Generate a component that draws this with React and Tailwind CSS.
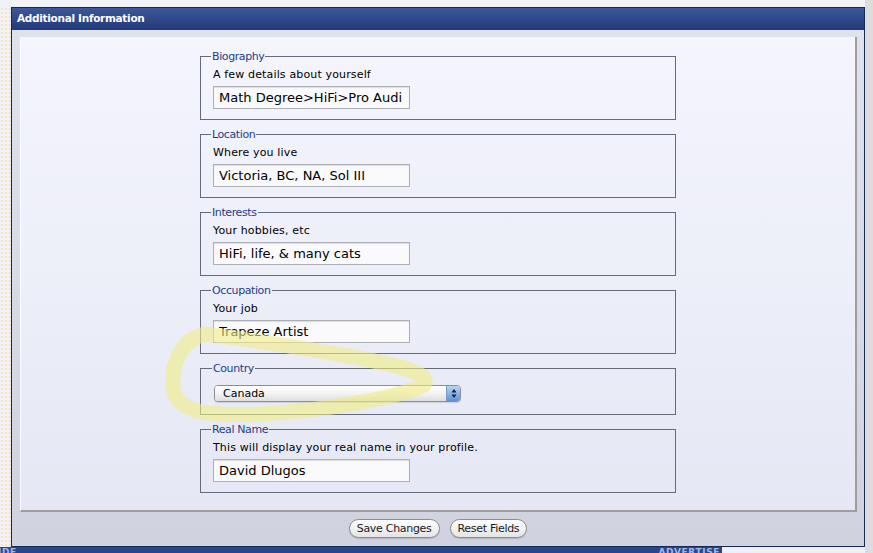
import React from 'react';

const fields = [
    { legend: 'Biography', hint: 'A few details about yourself', value: 'Math Degree>HiFi>Pro Audi' },
    { legend: 'Location', hint: 'Where you live', value: 'Victoria, BC, NA, Sol III' },
    { legend: 'Interests', hint: 'Your hobbies, etc', value: 'HiFi, life, & many cats' },
    { legend: 'Occupation', hint: 'Your job', value: 'Trapeze Artist' },
];

const Legend = ({ children }) => (
    <legend className="ml-[-2px] px-[1px] text-[11px] leading-[13px] text-[#1f3d8a] font-['DejaVu_Sans',sans-serif] tracking-[-0.4px]">
        {children}
    </legend>
);

const TextField = ({ legend, hint, value }) => (
    <fieldset className="border border-[#646b7b] pl-[12px] pr-[11px] pb-[10px]">
        <Legend>{legend}</Legend>
        <p className="mt-[5px] text-[11px] leading-[14px] text-black tracking-[0.15px]">{hint}</p>
        <input
            readOnly
            value={value}
            className="mt-[4px] block w-[197px] h-[23px] px-[5px] bg-[#fafafd] border border-[#aeb0b8] shadow-[inset_0_1px_1px_rgba(0,0,0,0.12)] text-[13px] text-black outline-none font-['DejaVu_Sans',sans-serif]"
        />
    </fieldset>
);

const PillButton = ({ children }) => (
    <button className="h-[19px] px-[7px] rounded-full border border-[#8d8d8d] bg-gradient-to-b from-white to-[#e4e4e4] shadow-[0_1px_1px_rgba(0,0,0,0.15)] text-[11px] leading-[17px] text-[#1a1a1a] font-['DejaVu_Sans',sans-serif] tracking-[-0.3px]">
        {children}
    </button>
);

export default function App() {
    return (
        <div className="relative w-[873px] h-[553px] overflow-hidden bg-[#f1f1f6] font-['DejaVu_Sans',sans-serif] flex">
            <div className="flex flex-col w-[865px]">
                <div className="h-[7px] shrink-0" />
                <div className="flex h-[540px] shrink-0">
                    {/* dotted page gutter */}
                    <div className="w-[11px] bg-[#f2f1f3] bg-[radial-gradient(#ece6c4_1px,transparent_1px)] bg-[length:4px_4px]" />

                    {/* Additional Information panel */}
                    <div className="w-[854px] border border-[#16285a] flex flex-col bg-gradient-to-b from-[#dfe3ee] to-[#d0d3df]">
                        <div className="h-[22px] shrink-0 bg-gradient-to-b from-[#3d5898] to-[#22397a] px-[5px] flex items-center">
                            <span className="text-white font-bold text-[10.5px] tracking-[-0.3px]">Additional Information</span>
                        </div>

                        <div className="pt-[7px] pl-[8px] pr-[7px]">
                            <div className="border-r-2 border-b-2 border-[#a19d9d] border-l border-l-[#fbfcff] bg-gradient-to-b from-[#f4f5fd] to-[#e5e8f4] pt-[13px] pb-[17px] pl-[179px]">
                                <div className="w-[476px] flex flex-col gap-[8px]">
                                    {fields.map(f => (
                                        <TextField key={f.legend} {...f} />
                                    ))}

                                    <fieldset className="border border-[#646b7b] pl-[13px] pb-[12px]">
                                        <Legend>Country</Legend>
                                        <div className="mt-[10px] w-[247px] h-[17px] flex rounded-[4px] border border-[#8a8e98] overflow-hidden shadow-[0_1px_1px_rgba(0,0,0,0.12)]">
                                            <div className="flex-1 bg-gradient-to-b from-white via-[#f3f3f3] to-[#dedede] pl-[8px] text-[11px] leading-[15px] text-black">
                                                Canada
                                            </div>
                                            <div className="w-[14px] bg-gradient-to-b from-[#b9d4f2] via-[#8cb4e6] to-[#5f8fd4] border-l border-[#7e9ccb] flex items-center justify-center">
                                                <svg width="6" height="11" viewBox="0 0 6 11">
                                                    <path d="M3 1 L5.5 4.5 H0.5 Z" fill="#10203f" />
                                                    <path d="M3 10 L5.5 6.5 H0.5 Z" fill="#10203f" />
                                                </svg>
                                            </div>
                                        </div>
                                    </fieldset>

                                    <TextField
                                        legend="Real Name"
                                        hint="This will display your real name in your profile."
                                        value="David Dlugos"
                                    />
                                </div>
                            </div>
                        </div>

                        <div className="flex-1 flex items-center justify-center gap-[10px] pb-[1px]">
                            <PillButton>Save Changes</PillButton>
                            <PillButton>Reset Fields</PillButton>
                        </div>
                    </div>
                </div>

                {/* footer strip, cut off by the window */}
                <div className="flex h-[6px] shrink-0 overflow-hidden">
                    <div className="w-[722px] bg-[#2b4688] flex justify-between items-start overflow-hidden">
                        <span className="text-[9px] leading-[9px] font-bold text-[#9fb8e8] tracking-[0.6px] mt-[1px] ml-[-2px]">IDE</span>
                        <span className="text-[9px] leading-[9px] font-bold text-[#9fb8e8] tracking-[0.6px] mt-[1px] mr-[2px]">ADVERTISE</span>
                    </div>
                    <div className="flex-1 bg-[#eef0f8]" />
                </div>
            </div>
            <div className="flex-1 bg-[#dcdcdc]" />

            {/* yellow hand-drawn highlight */}
            <svg className="absolute inset-0 pointer-events-none" width="873" height="553">
                <path
                    d="M206 334 C184 338 171 360 173 386 C175 410 200 417 262 414 C330 410 396 398 424 385 C432 374 404 366 348 356 C296 347 252 340 206 334"
                    fill="none"
                    stroke="#f0ec84"
                    strokeOpacity="0.6"
                    strokeWidth="15"
                    strokeLinecap="round"
                />
            </svg>
        </div>
    );
}
